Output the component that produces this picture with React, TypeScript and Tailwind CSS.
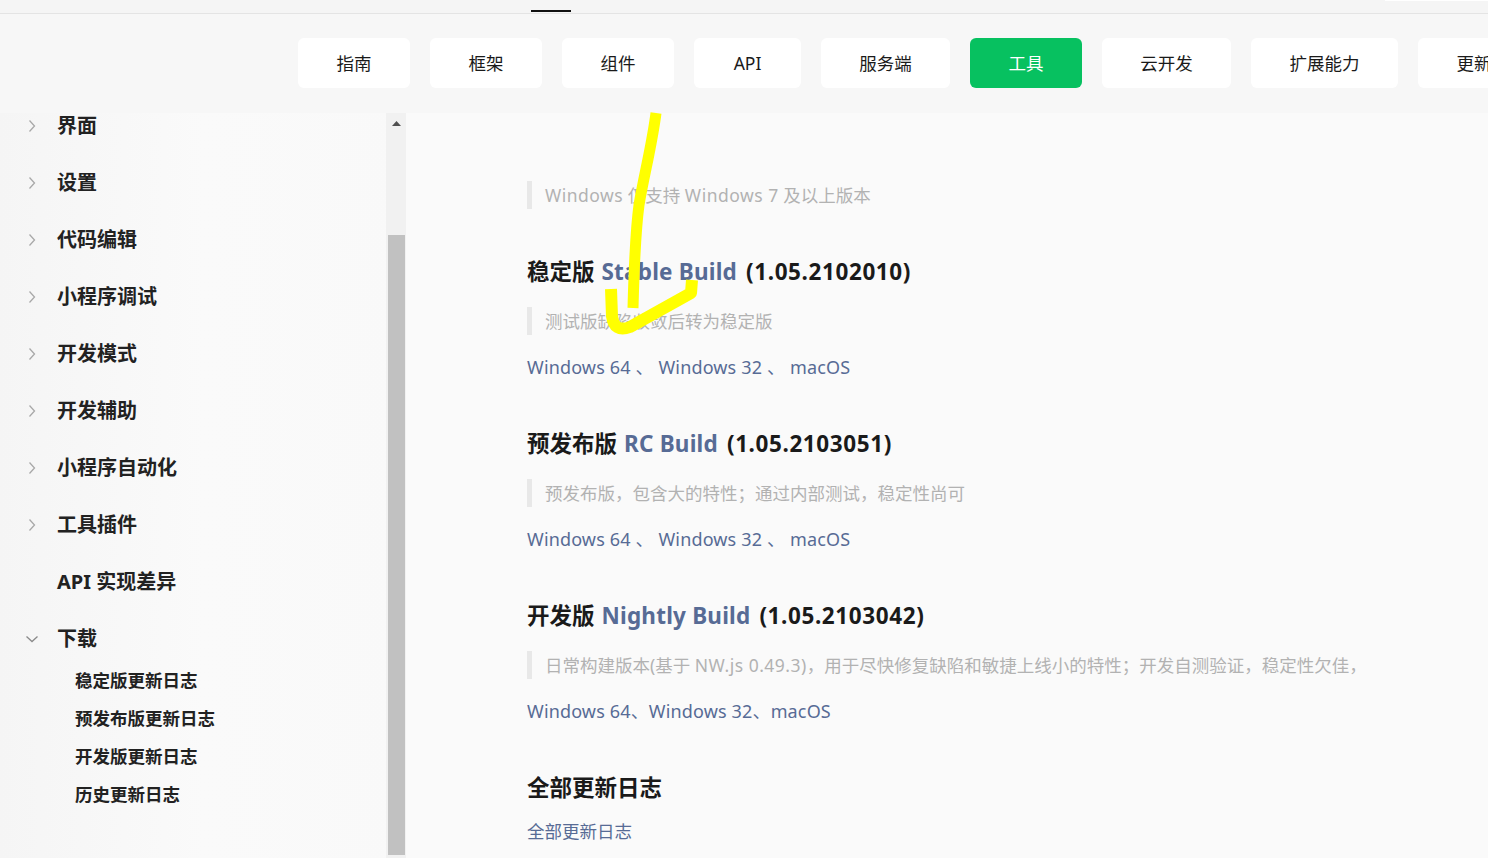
import React from "react";

const FONT = '"Noto Sans", "Noto Sans CJK SC", sans-serif';

const navItems: { label: string; w: string }[] = [
  { label: "指南", w: "w-[112px]" },
  { label: "框架", w: "w-[112px]" },
  { label: "组件", w: "w-[112px]" },
  { label: "API", w: "w-[107px]" },
  { label: "服务端", w: "w-[129px]" },
  { label: "工具", w: "w-[112px]" },
  { label: "云开发", w: "w-[129px]" },
  { label: "扩展能力", w: "w-[147px]" },
  { label: "更新日志", w: "w-[147px]" },
];

const sideItems: { label: string; icon: "right" | "down" | "none" }[] = [
  { label: "界面", icon: "right" },
  { label: "设置", icon: "right" },
  { label: "代码编辑", icon: "right" },
  { label: "小程序调试", icon: "right" },
  { label: "开发模式", icon: "right" },
  { label: "开发辅助", icon: "right" },
  { label: "小程序自动化", icon: "right" },
  { label: "工具插件", icon: "right" },
  { label: "API 实现差异", icon: "none" },
  { label: "下载", icon: "down" },
];

const subItems = ["稳定版更新日志", "预发布版更新日志", "开发版更新日志", "历史更新日志"];

function Chevron({ dir }: { dir: "right" | "down" | "none" }) {
  if (dir === "none") return <span className="w-[14px]" />;
  if (dir === "right")
    return (
      <svg width="14" height="14" viewBox="0 0 14 14" className="shrink-0">
        <polyline points="4.5,1.5 9.5,7 4.5,12.5" fill="none" stroke="#a8a8a8" strokeWidth="1.3" />
      </svg>
    );
  return (
    <svg width="14" height="14" viewBox="0 0 14 14" className="shrink-0">
      <polyline points="1.5,4.5 7,9.5 12.5,4.5" fill="none" stroke="#8a8a8a" strokeWidth="1.3" />
    </svg>
  );
}

function Quote({ children }: { children: React.ReactNode }) {
  return (
    <div className="flex h-[28px] items-center border-l-[5px] border-[#e8e8e8] pl-[13px] text-[17.5px] text-[#b2b2b2] whitespace-pre">
      {children}
    </div>
  );
}

function L({ children }: { children: React.ReactNode }) {
  return <span className="tracking-[0.5px]">{children}</span>;
}

function H3({ zh, en, ver }: { zh: string; en?: string; ver?: string }) {
  return (
    <div className="flex h-[32px] items-center text-[22.5px] font-bold text-[#1a1a1a] whitespace-nowrap">
      <span>{zh}</span>
      {en && <span className="ml-[7px] tracking-[0.2px] text-[#576b95]">{en}</span>}
      {ver && <span className="ml-[9px] tracking-[0.6px]">{ver}</span>}
    </div>
  );
}

function Links({ spaced }: { spaced: boolean }) {
  const sep = spaced ? " 、 " : "、";
  return (
    <div className="flex h-[26px] items-center text-[18px] tracking-[0.15px] text-[#576b95] whitespace-pre">
      <span>Windows 64</span>
      <span>{sep}</span>
      <span>Windows 32</span>
      <span>{sep}</span>
      <span>macOS</span>
    </div>
  );
}

export default function App() {
  return (
    <div
      className="relative h-[858px] w-[1488px] overflow-hidden bg-[#f7f7f7]"
      style={{ fontFamily: FONT }}
    >
      {/* top strip */}
      <div className="relative h-[14px] border-b border-[#e4e4e4] bg-[#f5f5f5]">
        <div className="absolute left-[531px] top-[10px] h-[2px] w-[40px] bg-[#111]" />
        <div className="absolute right-0 top-0 h-[1px] w-[103px] bg-white" />
      </div>

      {/* nav */}
      <div className="flex h-[99px] gap-[20px] bg-[#f7f7f7] pl-[298px] pt-[24px]">
        {navItems.map((n) => {
          const active = n.label === "工具";
          return (
            <div
              key={n.label}
              className={
                "flex h-[50px] shrink-0 items-center justify-center rounded-[6px] text-[17.5px] whitespace-nowrap " +
                n.w +
                " " +
                (active ? "bg-[#07c160] text-white" : "bg-white text-[#1a1a1a]")
              }
            >
              {n.label}
            </div>
          );
        })}
      </div>

      {/* body */}
      <div className="flex h-[745px]">
        {/* sidebar */}
        <div className="relative flex w-[406px] shrink-0 bg-gradient-to-r from-[#f5f5f5] via-[#fafafa] to-[#f9f9f9]">
          <div className="flex-1 overflow-hidden">
            <div className="-mt-[16px]">
              {sideItems.map((it) => (
                <div key={it.label} className="flex h-[57px] items-center pl-[25px]">
                  <Chevron dir={it.icon} />
                  <span className="ml-[18px] text-[20px] font-bold text-[#222]">{it.label}</span>
                </div>
              ))}
              <div className="-mt-[6px]">
                {subItems.map((s) => (
                  <div key={s} className="flex h-[38px] items-center pl-[75px] text-[17.5px] font-bold text-[#222]">
                    {s}
                  </div>
                ))}
              </div>
            </div>
          </div>
          {/* scrollbar */}
          <div className="flex w-[20px] flex-col items-center bg-[#f1f1f1]">
            <div className="flex h-[122px] w-full justify-center pt-[8px]">
              <svg width="9" height="5" viewBox="0 0 9 5">
                <polygon points="0,5 4.5,0 9,5" fill="#505050" />
              </svg>
            </div>
            <div className="w-[17px] flex-1 bg-[#c1c1c1]" />
            <div className="h-[3px]" />
          </div>
        </div>

        {/* main */}
        <div className="flex-1 bg-[#fafafa] pl-[121px] pt-[68px]">
          <Quote>
            <L>Windows</L> 仅支持 <L>Windows 7</L> 及以上版本
          </Quote>

          <div className="mt-[47px]">
            <H3 zh="稳定版" en="Stable Build" ver="(1.05.2102010)" />
          </div>
          <div className="mt-[19px]">
            <Quote>测试版缺陷收敛后转为稳定版</Quote>
          </div>
          <div className="mt-[19px]">
            <Links spaced />
          </div>

          <div className="mt-[48px]">
            <H3 zh="预发布版" en="RC Build" ver="(1.05.2103051)" />
          </div>
          <div className="mt-[19px]">
            <Quote>预发布版，包含大的特性；通过内部测试，稳定性尚可</Quote>
          </div>
          <div className="mt-[19px]">
            <Links spaced />
          </div>

          <div className="mt-[48px]">
            <H3 zh="开发版" en="Nightly Build" ver="(1.05.2103042)" />
          </div>
          <div className="mt-[19px]">
            <Quote>
              日常构建版本(基于 <L>NW.js 0.49.3)</L>，用于尽快修复缺陷和敏捷上线小的特性；开发自测验证，稳定性欠佳，
            </Quote>
          </div>
          <div className="mt-[19px]">
            <Links spaced={false} />
          </div>

          <div className="mt-[48px]">
            <H3 zh="全部更新日志" />
          </div>
          <div className="mt-[14px] flex h-[26px] items-center text-[17.5px] text-[#576b95]">全部更新日志</div>
        </div>
      </div>

      {/* yellow hand-drawn arrow annotation */}
      <svg
        className="pointer-events-none absolute left-0 top-0"
        width="1488"
        height="858"
        viewBox="0 0 1488 858"
      >
        <path
          d="M656 113 C 652 145, 644 175, 639 205 C 635 235, 634 270, 633 308"
          fill="none"
          stroke="#ffff00"
          strokeWidth="11"
        />
        <path
          d="M611 289 L 612 316 Q 614 333 630 327 L 691 293 L 692 280"
          fill="none"
          stroke="#ffff00"
          strokeWidth="12"
          strokeLinejoin="round"
        />
      </svg>
    </div>
  );
}
